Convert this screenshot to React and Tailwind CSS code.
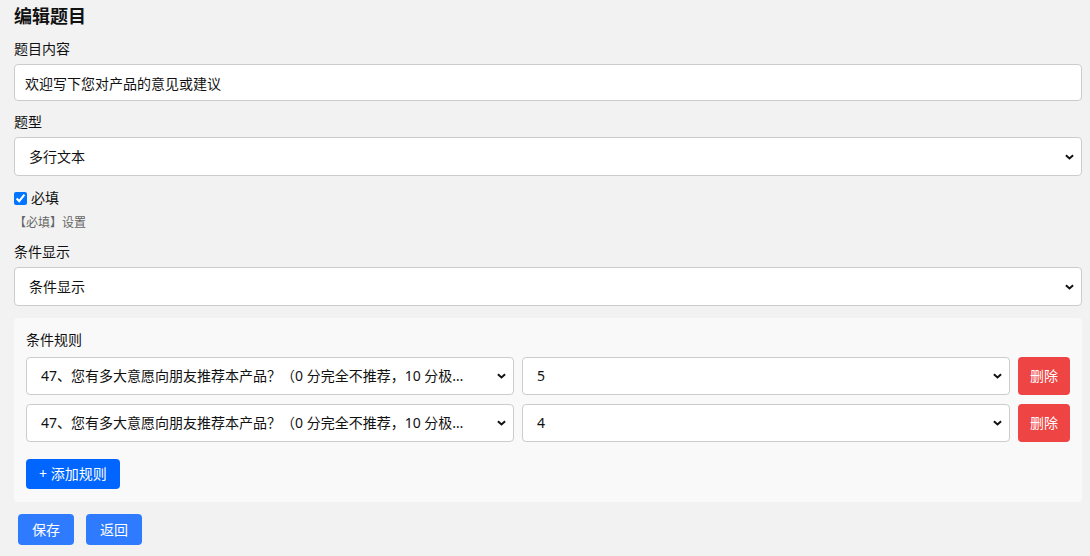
import { useState } from 'react';

const QUESTION = '47、您有多大意愿向朋友推荐本产品？（0 分完全不推荐，10 分极其推荐）';

const Chevron = () => (
  <svg
    viewBox="0 0 10 6"
    className="pointer-events-none absolute right-[8px] top-1/2 -translate-y-1/2 w-[9px] h-[6px]"
  >
    <path d="M1 1l4 3.6L9 1" fill="none" stroke="#111" strokeWidth="2.2" />
  </svg>
);

const Select = ({ value, options, className = '', size = 'h-[38px]', pad = 'pr-7' }) => (
  <div className={`relative ${className}`}>
    <select
      defaultValue={value}
      className={`w-full ${size} ${pad} appearance-none truncate rounded-[4px] border border-[#cccccc] bg-white pl-[14px] text-sm text-[#111] outline-none`}
    >
      {options.map((o) => (
        <option key={o} value={o}>
          {o}
        </option>
      ))}
    </select>
    <Chevron />
  </div>
);

export default function App() {
  const [rules] = useState([
    { id: 1, value: '5' },
    { id: 2, value: '4' },
  ]);

  return (
    <div
      className="min-h-[556px] bg-[#f2f2f2] pl-[14px] pr-[8px] text-sm text-[#111]"
      style={{ fontFamily: '"Noto Sans", "Noto Sans CJK SC", sans-serif' }}
    >
      <h2 className="pt-[4px] text-lg font-bold leading-[24px]">编辑题目</h2>

      <label className="mt-[11px] block leading-[20px]">题目内容</label>
      <input
        defaultValue="欢迎写下您对产品的意见或建议"
        className="mt-[5px] block h-[37px] w-full rounded-[4px] border border-[#cccccc] bg-white px-[10px] text-sm outline-none"
      />

      <label className="mt-[11px] block leading-[20px]">题型</label>
      <Select
        value="多行文本"
        options={['单行文本', '多行文本', '单选', '多选']}
        className="mt-[5px]"
        size="h-[39px]"
      />

      <label className="mt-[12px] flex items-center gap-[4px] leading-[20px]">
        <input type="checkbox" defaultChecked className="h-[13px] w-[13px] accent-[#0075ff]" />
        必填
      </label>
      <p className="mt-[7px] text-xs leading-[16px] text-[#666]">【必填】设置</p>

      <label className="mt-[11px] block leading-[20px]">条件显示</label>
      <Select
        value="条件显示"
        options={['总是显示', '条件显示']}
        className="mt-[5px]"
        size="h-[39px]"
      />

      <div className="mt-[12px] rounded-[4px] bg-[#f9f9f9] px-[12px] pt-[12px] pb-[13px]">
        <div className="leading-[20px]">条件规则</div>
        <div className="mt-[7px] flex flex-col gap-[9px]">
          {rules.map((r) => (
            <div key={r.id} className="flex items-center gap-[8px]">
              <Select value={QUESTION} options={[QUESTION]} className="flex-1 min-w-0" pad="pr-[48px]" />
              <Select
                value={r.value}
                options={['0', '1', '2', '3', '4', '5', '6', '7', '8', '9', '10']}
                className="flex-1 min-w-0"
              />
              <button className="h-[38px] w-[52px] shrink-0 rounded-[4px] bg-[#ef4444] text-sm text-white">
                删除
              </button>
            </div>
          ))}
        </div>
        <button className="mt-[17px] h-[30px] rounded-[4px] bg-[#0066ff] px-[13px] text-sm text-white">
          + 添加规则
        </button>
      </div>

      <div className="mt-[12px] flex gap-[12px] pl-[4px]">
        <button className="h-[31px] w-[56px] rounded-[4px] bg-[#2f7bff] text-sm text-white">保存</button>
        <button className="h-[31px] w-[56px] rounded-[4px] bg-[#2f7bff] text-sm text-white">返回</button>
      </div>
    </div>
  );
}
